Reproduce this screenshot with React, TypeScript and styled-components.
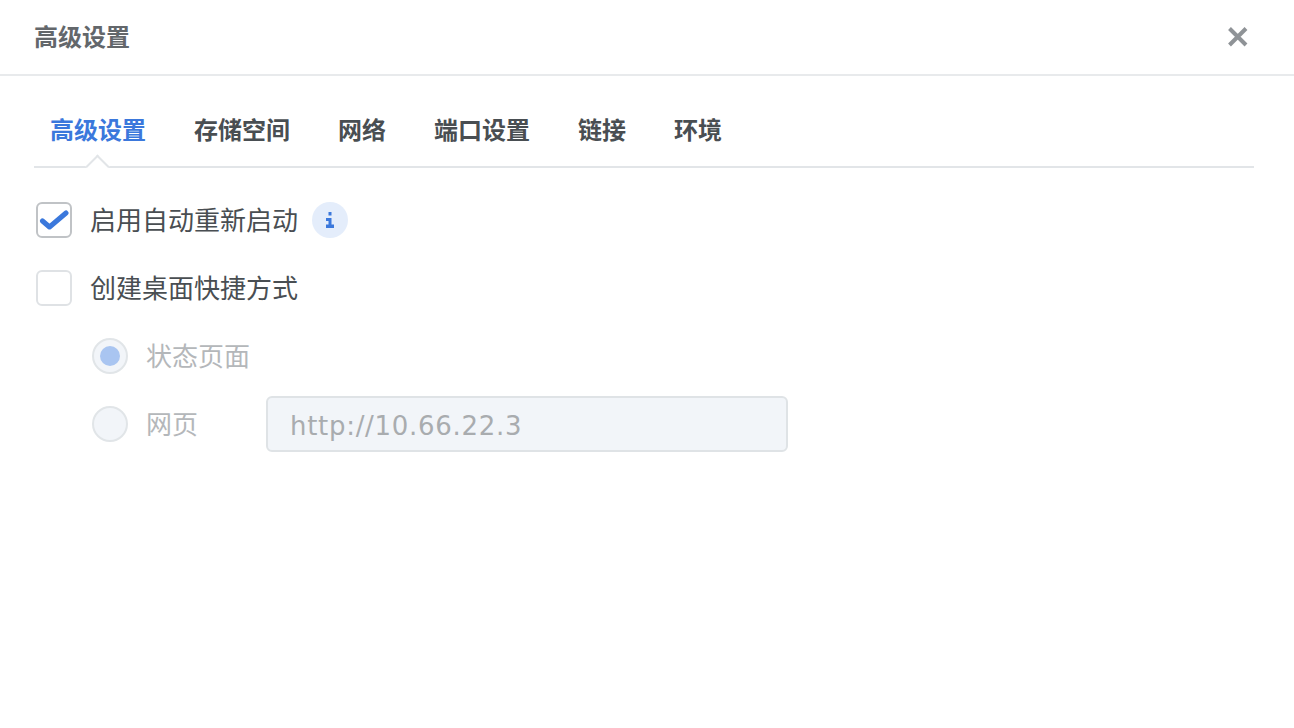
import React from 'react';
import styled, {createGlobalStyle} from 'styled-components';

const GlobalStyle = createGlobalStyle`
  html, body {
    margin: 0;
    padding: 0;
    background: #fff;
  }
  body {
    font-family: "Noto Sans CJK SC", "Liberation Sans", sans-serif;
  }
`;

const TABS = ['高级设置', '存储空间', '网络', '端口设置', '链接', '环境'];

export default function App() {
  return (
    <Page>
      <GlobalStyle />
      <Header>
        <Title>高级设置</Title>
        <CloseButton aria-label="关闭">
          <svg width="22" height="22" viewBox="0 0 22 22">
            <path
              d="M2.5 2.5 L19 19 M19 2.5 L2.5 19"
              stroke="#8f9397"
              strokeWidth="4"
              fill="none"
            />
          </svg>
        </CloseButton>
      </Header>
      <Body>
        <TabBar>
          {TABS.map((tab, index) => (
            <Tab key={tab} $active={index === 0}>
              {tab}
            </Tab>
          ))}
        </TabBar>
        <Form>
          <Row>
            <Checkbox $checked>
              <svg width="30" height="24" viewBox="0 0 30 24">
                <path
                  d="M3.5 13 L10.5 19 L27 5"
                  stroke="#3b78dc"
                  strokeWidth="5"
                  strokeLinecap="round"
                  strokeLinejoin="round"
                  fill="none"
                />
              </svg>
            </Checkbox>
            <Label>启用自动重新启动</Label>
            <InfoBadge>
              <svg width="12" height="16" viewBox="0 0 12 16">
                <path
                  d="M4.5 0 H7.5 V3.5 H4.5 Z M2 6 H7.5 V12.5 H10 V16 H2 V12.5 H4.5 V9 H2 Z"
                  fill="#3b78dc"
                />
              </svg>
            </InfoBadge>
          </Row>
          <Row>
            <Checkbox />
            <Label>创建桌面快捷方式</Label>
          </Row>
          <SubRow>
            <Radio $selected />
            <RadioLabel>状态页面</RadioLabel>
          </SubRow>
          <SubRow>
            <Radio />
            <RadioLabel>网页</RadioLabel>
            <UrlInput disabled value="http://10.66.22.3" readOnly />
          </SubRow>
        </Form>
      </Body>
    </Page>
  );
}

const Page = styled.div`
  width: 1294px;
  height: 728px;
  background: #fff;
  overflow: hidden;
`;

const Header = styled.div`
  display: flex;
  align-items: center;
  justify-content: space-between;
  height: 74px;
  padding: 0 45px 0 34px;
  border-bottom: 2px solid #e8eaec;
`;

const Title = styled.div`
  font-size: 24px;
  font-weight: 700;
  color: #63676b;
  margin-top: -4px;
`;

const CloseButton = styled.div`
  display: flex;
  width: 22px;
  height: 22px;
  margin-top: -1px;
`;

const Body = styled.div`
  padding: 0 40px 0 34px;
`;

const TabBar = styled.div`
  display: flex;
  gap: 48px;
  height: 92px;
  padding: 30px 0 0 16px;
  box-sizing: border-box;
  border-bottom: 2px solid #e2e5e8;
`;

const Tab = styled.div<{$active?: boolean}>`
  position: relative;
  font-size: 24px;
  line-height: 46px;
  height: 46px;
  font-weight: 700;
  color: ${p => (p.$active ? '#3b78dc' : '#494e52')};

  ${p =>
    p.$active &&
    `
    &::after {
      content: '';
      position: absolute;
      left: 50%;
      bottom: -23px;
      width: 17px;
      height: 17px;
      margin-left: -9px;
      background: #fff;
      border-left: 2px solid #e2e5e8;
      border-top: 2px solid #e2e5e8;
      box-sizing: border-box;
      transform: rotate(45deg);
    }
  `}
`;

const Form = styled.div`
  display: flex;
  flex-direction: column;
  gap: 32px;
  padding: 34px 0 0 2px;
`;

const Row = styled.div`
  display: flex;
  align-items: center;
  height: 36px;
`;

const SubRow = styled(Row)`
  padding-left: 56px;
`;

const Checkbox = styled.div<{$checked?: boolean}>`
  display: flex;
  align-items: center;
  justify-content: center;
  width: 36px;
  height: 36px;
  box-sizing: border-box;
  border-radius: 6px;
  border: 2px solid ${p => (p.$checked ? '#c0c3c6' : '#dfe2e5')};
  background: #fff;
  margin-right: 18px;

  svg {
    flex: none;
  }
`;

const Label = styled.div`
  font-size: 26px;
  line-height: 34px;
  padding-bottom: 2px;
  color: #494e52;
`;

const InfoBadge = styled.div`
  display: flex;
  align-items: center;
  justify-content: center;
  width: 36px;
  height: 36px;
  border-radius: 50%;
  background: #e4edfb;
  margin-left: 14px;
`;

const Radio = styled.div<{$selected?: boolean}>`
  display: flex;
  align-items: center;
  justify-content: center;
  width: 36px;
  height: 36px;
  box-sizing: border-box;
  border-radius: 50%;
  border: 2px solid #e1e5e8;
  background: #f2f5f9;
  margin-right: 18px;

  ${p =>
    p.$selected &&
    `
    &::after {
      content: '';
      width: 20px;
      height: 20px;
      border-radius: 50%;
      background: #a9c5f1;
    }
  `}
`;

const RadioLabel = styled.div`
  font-size: 26px;
  line-height: 34px;
  padding-bottom: 2px;
  width: 120px;
  color: #b4b7ba;
`;

const UrlInput = styled.input`
  width: 522px;
  height: 56px;
  flex: none;
  box-sizing: border-box;
  padding: 4px 22px 0;
  border-radius: 6px;
  border: 2px solid #dfe3e6;
  background: #f2f5f9;
  font-family: "DejaVu Sans", "Liberation Sans", sans-serif;
  font-size: 26px;
  letter-spacing: 0.7px;
  color: #a9acaf;
  -webkit-text-fill-color: #a9acaf;
  opacity: 1;
`;
